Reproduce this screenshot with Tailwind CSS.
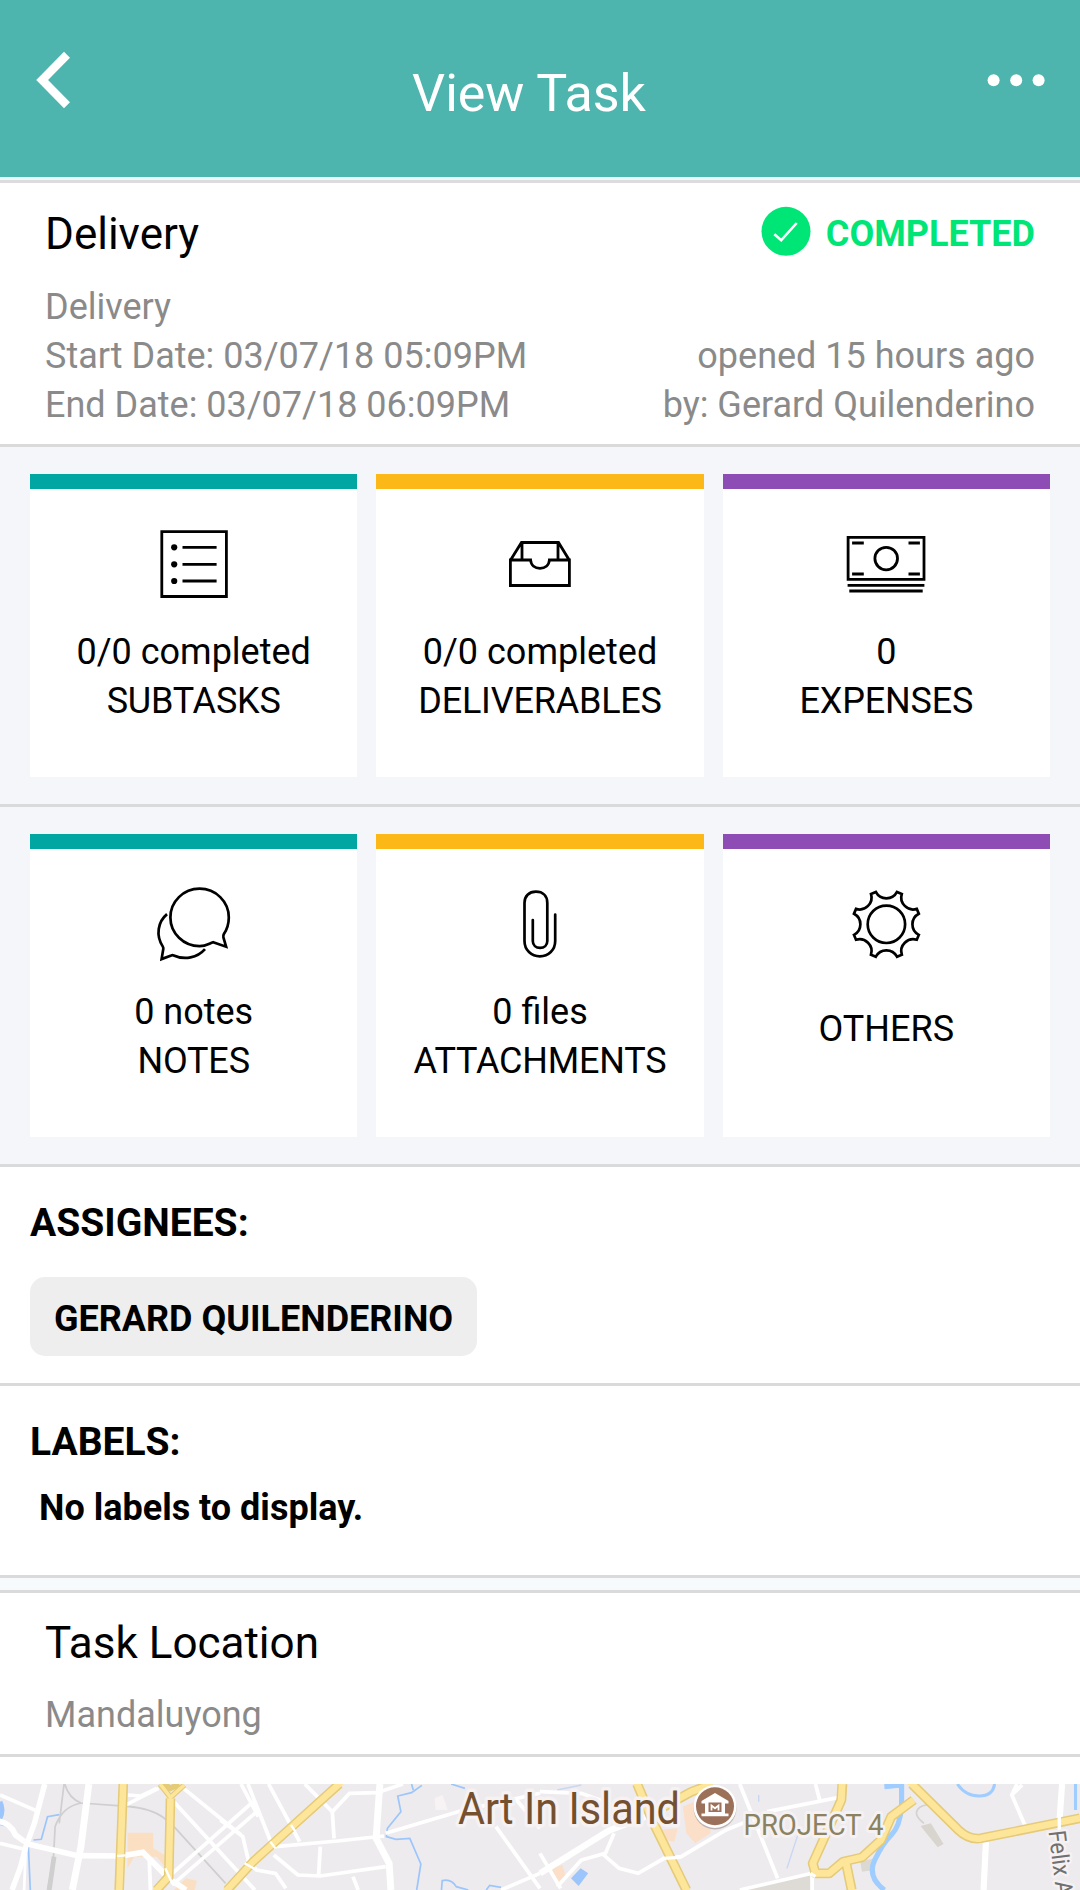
<!DOCTYPE html>
<html lang="en">
<head>
<meta charset="utf-8">
<title>View Task</title>
<script src="https://cdn.jsdelivr.net/npm/@tailwindcss/browser@4"></script>
</head>
<body class="bg-white">
<div class="w-[1080px] h-[1890px] overflow-hidden bg-white text-black font-['Roboto',sans-serif] text-[36px] leading-[49px] flex flex-col">

  <header class="h-[177px] shrink-0 bg-[#4db5ad] text-white flex items-start justify-between pl-9 pr-[35px]">
    <svg class="w-[35px] h-[58px] mt-[51px]" viewBox="36 51 35 58" fill="none" stroke="#fff" stroke-width="8.4"><path d="M67 54.7 42.1 80 67 105.3"/></svg>
    <h1 class="text-[52px] leading-[62px] mt-[63px]">View Task</h1>
    <svg class="w-[58px] h-[14px] mt-[73px]" viewBox="987 73 58 14" fill="#fff"><circle cx="993.6" cy="80.2" r="6"/><circle cx="1016.2" cy="80.2" r="6"/><circle cx="1038.6" cy="80.2" r="6"/></svg>
  </header>
  <div class="h-[6px] shrink-0 bg-[#e9f8f8] border-b-3 border-[#dcdcde]"></div>

  <section class="h-[264px] shrink-0 px-[45px] border-b-3 border-[#dadada]">
    <div class="flex justify-between pt-[25px]">
      <h2 class="text-[44px] leading-[52px]">Delivery</h2>
      <div class="flex">
        <svg class="w-[50px] h-[50px] mr-[15px] -mt-[2px]" viewBox="0 0 50 50"><circle cx="25" cy="25.3" r="24.5" fill="#00e676"/><path d="M13.3 28.3 20.2 34.3 35.700 17" fill="none" stroke="#fff" stroke-width="2.6"/></svg>
        <span class="font-bold text-[#00e676] leading-[53px]">COMPLETED</span>
      </div>
    </div>
    <div class="flex justify-between items-end mt-[22px] text-[#8a8a8a]">
      <div><p>Delivery</p><p>Start Date: 03/07/18 05:09PM</p><p>End Date: 03/07/18 06:09PM</p></div>
      <div class="text-right"><p>opened 15 hours ago</p><p>by: Gerard Quilenderino</p></div>
    </div>
  </section>

  <section class="h-[360px] shrink-0 bg-[#f5f6fa] border-b-3 border-[#d9dadc] px-[30px] pt-[27px] grid grid-cols-3 gap-[19px] items-start text-center">
    <div class="h-[303px] bg-white border-t-[15px] border-[#00a6a2] pt-[35px] flex flex-col items-center">
      <svg class="w-20 h-20 mb-6" viewBox="0 0 80 80" fill="none" stroke="#000" stroke-width="2.8"><path d="M7.8 7.7h64.6v64.8H7.8zM28.5 23.3h34.1M28.5 40.3h34.1M28.5 57h34.1"/><g fill="#000" stroke="none"><circle cx="20.2" cy="23.3" r="3.1"/><circle cx="20.2" cy="40.3" r="3.1"/><circle cx="20.2" cy="57" r="3.1"/></g></svg>
      <p>0/0 completed</p><p class="tracking-[-0.2px]">SUBTASKS</p>
    </div>
    <div class="h-[303px] bg-white border-t-[15px] border-[#fbb817] pt-[35px] flex flex-col items-center">
      <svg class="w-20 h-20 mb-6" viewBox="0 0 80 80" fill="none" stroke="#000" stroke-width="2.8"><path d="M10.4 36H30.6C31 41.5 35 44.3 40 44.3S49 41.5 49.4 36H69.4V61.5H10.4ZM10.6 36 21.5 18.5H58.5L69.2 36M22 18.5V36M58 18.5V36"/></svg>
      <p>0/0 completed</p><p class="tracking-[-0.2px]">DELIVERABLES</p>
    </div>
    <div class="h-[303px] bg-white border-t-[15px] border-[#8e4db5] pt-[35px] flex flex-col items-center">
      <svg class="w-20 h-20 mb-6" viewBox="-0.4 0 80 80" fill="none" stroke="#000" stroke-width="2.8"><path d="M1.7 13.4H77.6V55.3H1.7ZM5.7 19H17.4M62.1 19H73.5M5.7 50H17.4M62.1 50H73.5M1.2 61.3H78M2.9 67H76.3"/><circle cx="39.8" cy="34.6" r="11.3"/></svg>
      <p>0</p><p class="tracking-[-0.2px]">EXPENSES</p>
    </div>
  </section>

  <section class="h-[360px] shrink-0 bg-[#f5f6fa] border-b-3 border-[#d9dadc] px-[30px] pt-[27px] grid grid-cols-3 gap-[19px] items-start text-center">
    <div class="h-[303px] bg-white border-t-[15px] border-[#00a6a2] pt-[35px] flex flex-col items-center">
      <svg class="w-20 h-20 mb-6" viewBox="0.3 -0.4 80 80" fill="none" stroke="#000" stroke-width="2.7"><path d="M59.5 57.8 72.4 62.3 69.7 53Q69.2 51.3 70.2 49.6C73.5 44.5 75.1 39.5 75.1 33A29.2 28.7 0 1 0 46 61.7C52 61.7 55 59.3 59.5 57.8Z"/><path d="M13.3 29.7C4 37.5 2 51 9 62Q9.8 63.2 9.6 64.5L7.9 74.7 17.5 71Q18.6 70.5 20 71C31 76 43.5 73.5 51.3 64.7"/></svg>
      <p>0 notes</p><p class="tracking-[-0.2px]">NOTES</p>
    </div>
    <div class="h-[303px] bg-white border-t-[15px] border-[#fbb817] pt-[35px] flex flex-col items-center">
      <svg class="w-20 h-20 mb-6" viewBox="0 0 80 80" fill="none" stroke="#000" stroke-width="2.7" stroke-linecap="round"><path d="M55.2 30.5V57C55.2 66 48.5 72.3 39.9 72.3S24.5 66 24.5 57V19C24.5 12 29 7.7 35.900 7.700S47.3 12 47.3 19V57C47.3 61.2 44.2 63.9 40.1 63.9S32.8 61.2 32.8 57V36"/></svg>
      <p>0 files</p><p class="tracking-[-0.2px]">ATTACHMENTS</p>
    </div>
    <div class="h-[303px] bg-white border-t-[15px] border-[#8e4db5] pt-[35px] flex flex-col items-center">
      <svg class="w-20 h-20 mb-[41px]" viewBox="-40.4 -40.3 80 80" fill="none" stroke="#000" stroke-width="2.7"><circle r="18.7"/><path d="M-10.6-32.4A12 12 0 0 0 10.6-32.4L15.4-30.4A12 12 0 0 0 30.4-15.4L32.4-10.6A12 12 0 0 0 32.4 10.6L30.4 15.4A12 12 0 0 0 15.4 30.4L10.6 32.4A12 12 0 0 0-10.6 32.4L-15.4 30.4A12 12 0 0 0-30.4 15.4L-32.4 10.6A12 12 0 0 0-32.4-10.6L-30.4-15.4A12 12 0 0 0-15.4-30.4Z"/></svg>
      <p>OTHERS</p>
    </div>
  </section>

  <section class="h-[219px] shrink-0 border-b-3 border-[#dadada] px-[30px] pt-8 font-bold">
    <h3 class="text-[39px]">ASSIGNEES:</h3>
    <span class="inline-block mt-[29px] h-[79px] leading-[85px] px-6 rounded-[15px] bg-[#eee]">GERARD QUILENDERINO</span>
  </section>

  <section class="h-[192px] shrink-0 border-b-3 border-[#dadada] px-[30px] pt-8 font-bold">
    <h3 class="text-[39px]">LABELS:</h3>
    <p class="mt-[17px] pl-[9px]">No labels to display.</p>
  </section>

  <div class="h-[15px] shrink-0 bg-[#f7fafd] border-b-3 border-[#dadada]"></div>

  <section class="h-[164px] shrink-0 border-b-3 border-[#dadada] px-[45px] pt-[24px]">
    <h2 class="text-[44px] leading-[52px]">Task Location</h2>
    <p class="mt-[22px] text-[#8a8a8a]">Mandaluyong</p>
  </section>

  <svg class="mt-[27px] w-[1080px] h-[106px] shrink-0" viewBox="0 0 1080 106" fill="none" font-family="Roboto, sans-serif">
    <rect width="1080" height="106" fill="#eeebee"/>
    <!-- west half -->
    <g transform="scale(.34438 .33333) translate(0 -732)">
      <path d="M370 878H445V925L478 945V980L455 950H390L370 985ZM505 1050 540 1015 572 1022 565 1050Z" fill="#fbdfc2"/>
      <path d="M1262 775 1285 765 1300 810H1265Z" fill="#f7f3f5"/>
      <g stroke="#cfcfcf" stroke-width="5"><path d="M188 732Q200 775 235 789L370 799Q440 805 475 833L510 865 655 1030M235 789Q180 800 160 860L155 960 138 1050M186 732 172 850"/><path d="M157 950 143 1050" stroke-width="14"/></g>
      <g stroke="#9cc6fb" stroke-width="5"><path d="M172 824 138 830 120 898 97 900M82 910 88 1050M1225 736 1195 758 1155 768 1164 815 1125 865 1122 890 1150 898 1190 895 1222 972 1210 1050M1282 1050 1284 1022Q1310 1015 1325 1040L1360 1050M1412 1050 1422 1036 1455 1042M1195 732 1200 750M1310 732 1350 745"/><path d="M0 785Q12 810 0 835" stroke-width="14"/><path d="M0 852Q30 855 45 885L75 915" stroke-width="7"/></g>
      <g stroke="#fff" stroke-width="11">
        <path d="M130 732 100 850 75 920 60 980 35 1050" stroke-width="16"/>
        <path d="M258 732 235 920 210 1050" stroke-width="20"/>
        <path d="M0 845Q30 850 45 885L80 912 225 947 350 948 415 937 490 1015 540 1050" stroke-width="17"/>
        <path d="M0 765 105 812M0 910 80 930M370 765 410 768 455 745M365 795 460 745M433 950 437 1050M500 780 740 1050M533 745 700 885M720 732 790 915M700 732 750 830M640 840 705 890 722 965 745 990 800 1000 830 1045M490 1010 735 785M500 1035 740 820M780 732 870 905M885 732 965 815 970 895M965 815 1015 760 1095 758 1170 732M800 920 980 903 1115 888M795 945 865 1005 930 1008 1120 980M930 920 925 1010M1025 1010 1040 1050M1120 880 1340 812 1568 760M1440 860 1568 1045M1455 1050 1568 1000M1500 780 1568 865"/>
        <path d="M1103 732 1092 895 1130 970 1135 1050" stroke-width="20"/>
        <path d="M75 915 70 1050" stroke-width="8"/>
      </g>
      <g stroke="#e5ca78" stroke-width="28"><path d="M358 732 346 1050M495 775 490 1010 455 1050M985 732 735 965 660 1050"/><path d="M465 732 495 772 535 735M475 732 495 745 520 732" stroke-width="17"/></g>
      <g stroke="#fde69a" stroke-width="19"><path d="M358 725 346 1055M495 775 490 1010 450 1055M990 727 735 965 655 1055"/><path d="M465 732 495 772 535 735" stroke-width="10"/></g>
      <path d="M340 948 365 946M480 985 500 1030M710 970 745 990M785 905 800 925M845 855 858 875" stroke="#fff" stroke-width="7"/>
    </g>
    <!-- east half -->
    <g transform="translate(540 0) scale(.34438 .33333) translate(0 -732)">
      <path d="M415 800 500 760 495 880 450 910 425 880ZM350 870 400 865 390 905 360 900ZM35 985 65 975 75 1010 50 1040Z" fill="#fbdfc8"/>
      <path d="M575 1050 785 1003 790 1050Z" fill="#dedad6"/><path d="M930 965 970 955V990L935 995Z" fill="#dcd8d2"/>
      <path d="M90 1015 118 985 140 1000 112 1038Z" fill="#9cc6fb"/>
      <path d="M1155 795Q1110 790 1097 808T1115 850" stroke="#d5d2cf" stroke-width="5"/><path d="M1105 858 1135 850 1172 912 1155 922Z" fill="#d8d5cf"/>
      <g stroke="#9fcdff"><path d="M1050 732V800Q1045 860 1020 885T972 960 1000 1050M1000 740 1050 735" stroke-width="15"/><path d="M1212 732Q1235 768 1275 768T1320 732M1555 732V810" stroke-width="9"/><path d="M750 880 717 985M635 765V785M50 750 120 735" stroke="#c7d7f4" stroke-width="4"/></g>
      <g stroke="#fff" stroke-width="11">
        <path d="M0 1000 200 872 330 820 380 790" stroke-width="19"/>
        <path d="M0 940 60 1045M0 755 120 760 200 790M50 1040 120 960 190 940 215 880M185 945 230 985 285 1000 360 955 410 950 540 870 600 845M580 732 690 1015M800 732 812 780M660 815 865 773M580 1050 790 1000V1050M1385 732 1370 765 1410 860M1370 765 1400 735"/>
        <path d="M1516 732 1508 850M1295 905 1288 1050" stroke-width="18"/>
      </g>
      <g stroke="#e5ca78" stroke-width="29" stroke-linejoin="round"><path d="M282 732 330 850 425 1050M360 800 440 755 500 732M878 732 875 780 792 970 800 1000 840 1000 880 965 935 952 990 900 1020 830 1085 780M888 965 905 1050M1080 732 1215 870Q1245 900 1280 895L1568 835"/></g>
      <g stroke="#fde69a" stroke-width="20" stroke-linejoin="round"><path d="M278 722 330 850 430 1060M360 800 440 755 500 732M878 722 875 780 792 970 800 1000 840 1000 880 965 935 952 990 900 1020 830 1085 780M888 965 907 1060M1072 724 1215 870Q1245 900 1280 895L1575 833"/></g>
      <path d="M355 955 410 952M1508 820V870M785 1000 800 1010" stroke="#fff" stroke-width="10"/>
    </g>
    <g stroke="#f6f1f2" stroke-linejoin="round" paint-order="stroke">
      <text x="458" y="39.5" font-size="44.500" textLength="222" lengthAdjust="spacingAndGlyphs" fill="#75502f" stroke-width="7">Art In Island</text>
      <text x="743.5" y="51" font-size="30" textLength="140" lengthAdjust="spacingAndGlyphs" fill="#8a8260" stroke-width="6">PROJECT 4</text>
      <text transform="translate(1048.500 47.500) rotate(83)" font-size="24" textLength="65" lengthAdjust="spacingAndGlyphs" fill="#707070" stroke-width="5">Felix A</text>
    </g>
    <circle cx="715" cy="24" r="21.500" fill="#bdb3b0"/><circle cx="715" cy="22.500" r="21.500" fill="#fff"/><circle cx="715" cy="22.300" r="19" fill="#9c715a"/>
    <path d="M715 9 728.500 17V19.500H725V29.500H728.500V32.300H701.500V29.500H705V19.500H701.500V17Z" fill="#fff"/>
    <path d="M708.500 18.500H721.500V28H708.500Z" fill="#9c715a"/>
    <path d="M711.500 26.500V21.500L715 24.300 718.500 21.500V26.500" stroke="#fff" stroke-width="1.800"/>
  </svg>
</div>
</body>
</html>
